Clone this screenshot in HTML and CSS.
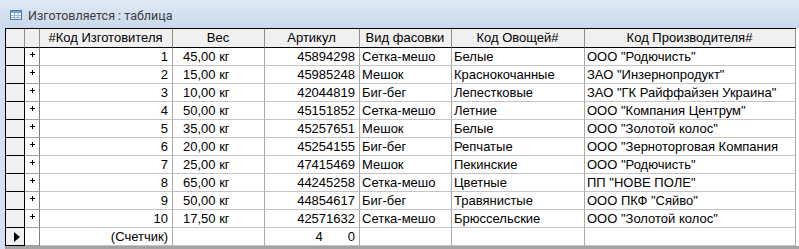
FILE: index.html
```html
<!DOCTYPE html>
<html lang="ru">
<head>
    <meta charset="UTF-8">
    <title>Изготовляется : таблица</title>
    <link rel="stylesheet" href="styles.css">
</head>
<body>
    <div class="window">
        <div class="titlebar">
            <svg class="table-icon" width="12" height="10" viewBox="0 0 12 10">
                <rect x="0.5" y="0.5" width="11" height="9" fill="#ffffff" stroke="#4a78b8"/>
                <rect x="1" y="1" width="10" height="2" fill="#7da2d6"/>
                <path d="M1 5.5H11M1 7.5H11M4.5 3V9M8 3V9" stroke="#9bb6dd" stroke-width="1"/>
            </svg>
            <span class="title">Изготовляется : таблица</span>
        </div>

        <div class="sheet">
            <table class="datasheet">
                <thead>
                    <tr>
                        <th class="sel"></th>
                        <th class="exp"></th>
                        <th class="c-id">#Код Изготовителя</th>
                        <th class="c-weight">Вес</th>
                        <th class="c-art">Артикул</th>
                        <th class="c-pack">Вид фасовки</th>
                        <th class="c-veg">Код Овощей#</th>
                        <th class="c-maker">Код Производителя#</th>
                    </tr>
                </thead>
                <tbody id="rows"></tbody>
                <tfoot>
                    <tr class="new-row">
                        <td class="sel"><span class="arrow"></span></td>
                        <td class="exp"></td>
                        <td class="num">(Счетчик)</td>
                        <td></td>
                        <td class="num">4<span class="gap"></span>0</td>
                        <td></td>
                        <td></td>
                        <td></td>
                    </tr>
                </tfoot>
            </table>
        </div>
        <div class="bottom-bar"></div>
    </div>

    <script>
        const rows = [
            [1, '45,00 кг', '45894298', 'Сетка-мешо', 'Белые', 'ООО "Родючисть"'],
            [2, '15,00 кг', '45985248', 'Мешок', 'Краснокочанные', 'ЗАО "Инзернопродукт"'],
            [3, '10,00 кг', '42044819', 'Биг-бег', 'Лепестковые', 'ЗАО "ГК Райффайзен Украина"'],
            [4, '50,00 кг', '45151852', 'Сетка-мешо', 'Летние', 'ООО "Компания Центрум"'],
            [5, '35,00 кг', '45257651', 'Мешок', 'Белые', 'ООО "Золотой колос"'],
            [6, '20,00 кг', '45254155', 'Биг-бег', 'Репчатые', 'ООО "Зерноторговая Компания'],
            [7, '25,00 кг', '47415469', 'Мешок', 'Пекинские', 'ООО "Родючисть"'],
            [8, '65,00 кг', '44245258', 'Сетка-мешо', 'Цветные', 'ПП "НОВЕ ПОЛЕ"'],
            [9, '50,00 кг', '44854617', 'Биг-бег', 'Травянистые', 'ООО ПКФ "Сяйво"'],
            [10, '17,50 кг', '42571632', 'Сетка-мешо', 'Брюссельские', 'ООО "Золотой колос"']
        ];

        const body = document.getElementById('rows');

        // build the datasheet rows
        rows.forEach(r => {
            const tr = document.createElement('tr');
            tr.innerHTML =
                '<td class="sel"></td>' +
                '<td class="exp"><span class="plus"></span></td>' +
                '<td class="num">' + r[0] + '</td>' +
                '<td class="weight">' + r[1] + '</td>' +
                '<td class="num">' + r[2] + '</td>' +
                '<td>' + r[3] + '</td>' +
                '<td>' + r[4] + '</td>' +
                '<td>' + r[5] + '</td>';
            body.appendChild(tr);
        });
    </script>
</body>
</html>
```

FILE: styles.css
```css
html, body {
    margin: 0;
    padding: 0;
}

body {
    width: 799px;
    height: 249px;
    overflow: hidden;
    background-color: #d3e0f0;
}

.window {
    display: flex;
    flex-direction: column;
    height: 249px;
}

.titlebar {
    display: flex;
    align-items: center;
    gap: 6px;
    height: 28px;
    padding-left: 10px;
    box-sizing: border-box;
    background: linear-gradient(#e1eaf6, #c9d8eb);
}

.table-icon {
    margin-top: 2px;
}

.title {
    font-family: Roboto, "Noto Sans", sans-serif;
    font-size: 12.5px;
    color: #3c3c3c;
    padding-top: 2px;
}

.sheet {
    display: flex;
    margin-left: 5px;
    width: 794px;
    background-color: #ffffff;
    border-right: 3px solid #8e8e8e;
}

.datasheet {
    table-layout: fixed;
    border-collapse: separate;
    border-spacing: 0;
    width: 791px;
    border-top: 1px solid #000000;
    border-left: 1px solid #000000;
    font-family: "Liberation Sans", Arial, sans-serif;
    font-size: 13px;
    color: #000000;
}

.datasheet th,
.datasheet td {
    box-sizing: border-box;
    height: 18px;
    padding: 0 3px 0 2px;
    line-height: 16px;
    border-right: 1px solid #a9a9a9;
    border-bottom: 1px solid #c4c4c4;
    white-space: nowrap;
    overflow: hidden;
    text-align: left;
}

.datasheet th {
    height: 19px;
    font-weight: normal;
    text-align: center;
    background-color: #f0f0f0;
    border-bottom: 1px solid #000000;
    border-right: 1px solid #909090;
}

.datasheet th.sel { width: 19px; }
.datasheet th.exp { width: 15px; }
.datasheet th.c-id { width: 133px; }
.datasheet th.c-weight { width: 92px; }
.datasheet th.c-art { width: 95px; }
.datasheet th.c-pack { width: 92px; }
.datasheet th.c-veg { width: 133px; }
.datasheet th.c-maker { width: 211px; }

.datasheet td.sel {
    background-color: #f0f0f0;
    border-bottom: 1px solid #000000;
    border-right: 1px solid #000000;
    padding: 0;
}

.datasheet td.exp {
    padding: 0;
    text-align: center;
    border-bottom: 1px solid #a0a0a0;
    border-right: 1px solid #808080;
}

.datasheet td.num {
    text-align: right;
    padding-right: 4px;
}

.datasheet td.weight {
    padding-left: 10px;
}

.plus {
    display: inline-block;
    width: 5px;
    height: 5px;
    margin-top: 3px;
    vertical-align: top;
    background:
        linear-gradient(#000000, #000000) center / 5px 1px no-repeat,
        linear-gradient(#000000, #000000) center / 1px 5px no-repeat;
}

.arrow {
    display: block;
    width: 0;
    height: 0;
    margin-left: 8px;
    border-top: 5px solid transparent;
    border-bottom: 5px solid transparent;
    border-left: 6px solid #000000;
}

.gap {
    display: inline-block;
    width: 25px;
}

.bottom-bar {
    flex: 1;
    margin-left: 5px;
    background-color: #a3a3a3;
}
```
